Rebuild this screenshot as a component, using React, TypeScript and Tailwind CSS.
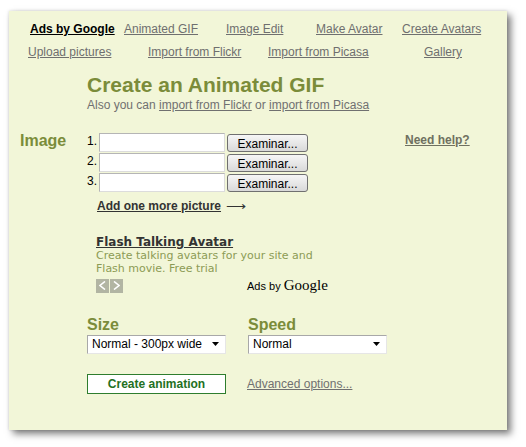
const navRow1 = [
  { label: "Ads by Google", w: "w-[94px]", strong: true },
  { label: "Animated GIF", w: "w-[102px]" },
  { label: "Image Edit", w: "w-[90px]" },
  { label: "Make Avatar", w: "w-[86px]" },
  { label: "Create Avatars", w: "w-[90px]" },
];

const navRow2 = [
  { label: "Upload pictures", w: "w-[120px]" },
  { label: "Import from Flickr", w: "w-[120px]" },
  { label: "Import from Picasa", w: "w-[156px]" },
  { label: "Gallery", w: "w-[60px]" },
];

function NavLink({ label, strong }: { label: string; strong?: boolean }) {
  return (
    <a
      href="#"
      className={
        strong
          ? "font-bold text-black underline"
          : "text-[#6f6f6f] underline"
      }
    >
      {label}
    </a>
  );
}

function FileRow({ n }: { n: number }) {
  return (
    <div className="flex h-[20px] items-start">
      <span className="w-[12px] text-[12px] leading-[16px] text-black">{n}.</span>
      <div className="h-[19px] w-[126px] border border-[#b5b5b5] border-b-[#dcdcdc] border-r-[#dcdcdc] bg-white" />
      <button className="ml-[2px] mt-[1px] h-[18px] w-[81px] rounded-[3px] border border-[#707070] bg-gradient-to-b from-[#f6f6f6] to-[#d9d9d9] pt-[2px] text-[12px] leading-[14px] text-black">
        Examinar...
      </button>
    </div>
  );
}

function Select({ value, w }: { value: string; w: string }) {
  return (
    <div
      className={`${w} flex h-[19px] items-center justify-between border border-[#a8a8a8] border-b-[#e6e6e6] border-r-[#e6e6e6] bg-white pl-[4px] pr-[6px] text-[12px] text-black`}
    >
      <span>{value}</span>
      <svg width="7" height="4" viewBox="0 0 7 4">
        <path d="M0 0h7L3.5 4z" fill="#000" />
      </svg>
    </div>
  );
}

export default function App() {
  return (
    <div
      className="h-[447px] w-[526px] overflow-hidden bg-white pl-[9px] pt-[11px]"
      style={{ fontFamily: '"Liberation Sans", Arial, sans-serif' }}
    >
      <div className="h-[419px] w-[498px] bg-[#f2f6d8] shadow-[4px_4px_7px_rgba(0,0,0,0.5),0_0_3px_rgba(0,0,0,0.15)]">
        <nav className="pt-[7px] text-[12px] leading-[23px]">
          <div className="flex pl-[21px]">
            {navRow1.map((l) => (
              <span key={l.label} className={`${l.w} shrink-0`}>
                <NavLink label={l.label} strong={l.strong} />
              </span>
            ))}
          </div>
          <div className="flex pl-[19px]">
            {navRow2.map((l) => (
              <span key={l.label} className={`${l.w} shrink-0`}>
                <NavLink label={l.label} />
              </span>
            ))}
          </div>
        </nav>

        <div className="mt-[8px] pl-[78px]">
          <h1 className="text-[21px] font-bold leading-[26px] text-[#7b8c3a]">
            Create an Animated GIF
          </h1>
          <p className="text-[12px] leading-[14px] text-[#707070]">
            Also you can <a href="#" className="underline">import from Flickr</a> or{" "}
            <a href="#" className="underline">import from Picasa</a>
          </p>
        </div>

        <div className="mt-[21px] flex">
          <div className="w-[78px] shrink-0 pl-[11px]">
            <span className="-mt-[2px] block text-[16px] font-bold leading-[20px] text-[#7b8c3a]">
              Image
            </span>
          </div>
          <div className="w-[221px] shrink-0">
            <FileRow n={1} />
            <FileRow n={2} />
            <FileRow n={3} />
          </div>
          <div className="ml-[97px] text-[12px] leading-[14px]">
            <a href="#" className="font-bold text-[#6f7060] underline">
              Need help?
            </a>
          </div>
        </div>

        <div className="pl-[78px]">
          <div className="ml-[10px] mt-[6px] flex items-center text-[12px] font-bold leading-[14px] text-[#333]">
            <a href="#" className="underline">Add one more picture</a>
            <span className="ml-[5px] text-[14px] font-normal leading-[14px]">⟶</span>
          </div>

          <div className="ml-[9px] mt-[22px]" style={{ fontFamily: '"DejaVu Sans", Verdana, sans-serif' }}>
            <a href="#" className="block text-[12px] font-bold leading-[14px] text-[#333] underline">
              Flash Talking Avatar
            </a>
            <p className="text-[11px] leading-[13px] text-[#8c9b55]">
              Create talking avatars for your site and
              <br />
              Flash movie. Free trial
            </p>
            <div className="mt-[2px] flex items-center">
              <div className="flex gap-[1px]">
                <span className="flex h-[14px] w-[13px] items-center justify-center bg-[#b2b5a3]">
                  <svg width="7" height="9" viewBox="0 0 7 9">
                    <path d="M6 0.5L1 4.5L6 8.5" stroke="#fff" strokeWidth="1.6" fill="none" />
                  </svg>
                </span>
                <span className="flex h-[14px] w-[13px] items-center justify-center bg-[#b2b5a3]">
                  <svg width="7" height="9" viewBox="0 0 7 9">
                    <path d="M1 0.5L6 4.5L1 8.5" stroke="#fff" strokeWidth="1.6" fill="none" />
                  </svg>
                </span>
              </div>
              <div
                className="ml-[124px] flex items-baseline text-black"
                style={{ fontFamily: '"Liberation Sans", Arial, sans-serif' }}
              >
                <span className="text-[11px]">Ads by</span>
                <span
                  className="ml-[3px] text-[15px] leading-[16px]"
                  style={{ fontFamily: '"Liberation Serif", "Times New Roman", serif' }}
                >
                  Google
                </span>
              </div>
            </div>
          </div>

          <div className="mt-[20px] flex">
            <div className="w-[161px] shrink-0">
              <div className="text-[16px] font-bold leading-[20px] text-[#7b8c3a]">Size</div>
              <div>
                <Select value="Normal - 300px wide" w="w-[139px]" />
              </div>
            </div>
            <div>
              <div className="text-[16px] font-bold leading-[20px] text-[#7b8c3a]">Speed</div>
              <div>
                <Select value="Normal" w="w-[139px]" />
              </div>
            </div>
          </div>

          <div className="mt-[20px] flex items-center">
            <button className="h-[20px] w-[139px] border border-[#2e7d2e] bg-white text-[12px] font-bold leading-[16px] text-[#237023]">
              Create animation
            </button>
            <a href="#" className="ml-[21px] text-[12px] text-[#707070] underline">
              Advanced options...
            </a>
          </div>
        </div>
      </div>
    </div>
  );
}
